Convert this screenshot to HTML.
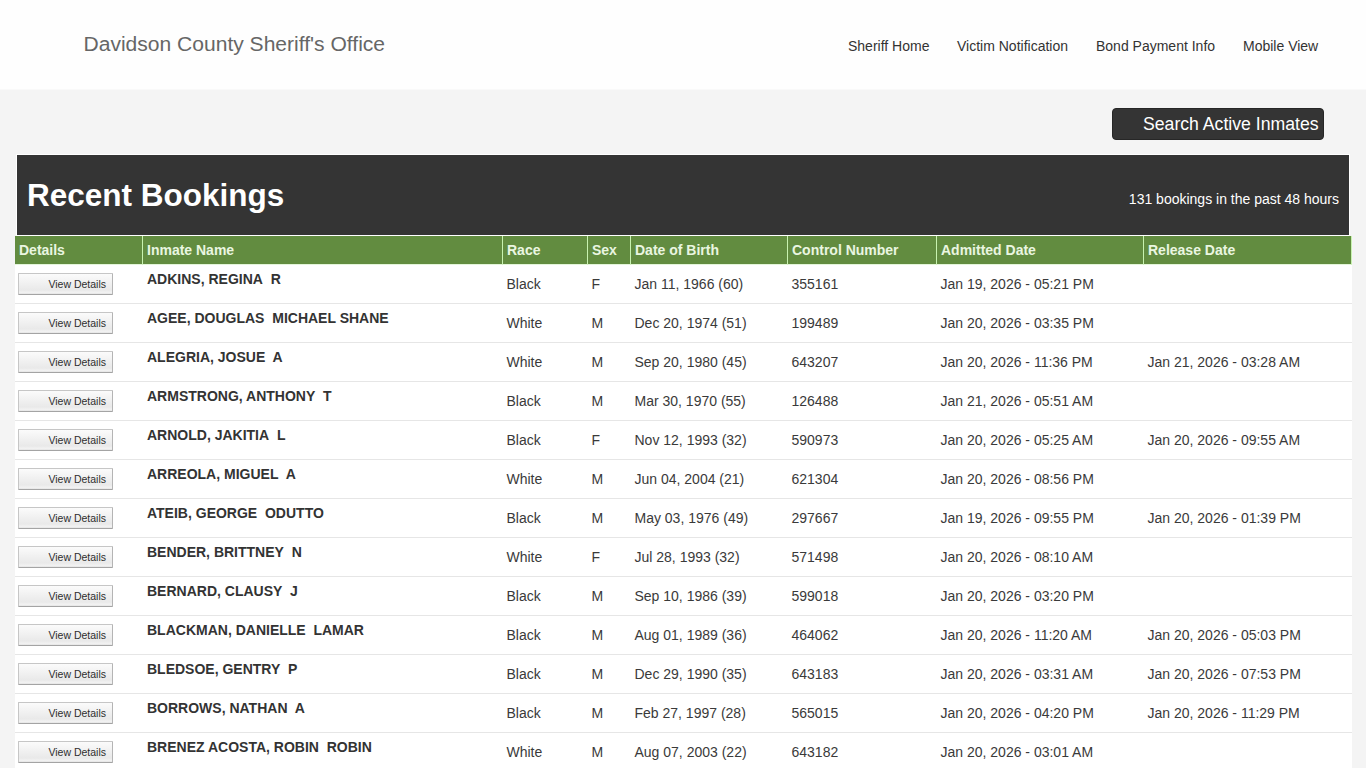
<!DOCTYPE html>
<html><head><meta charset="utf-8"><title>Recent Bookings</title>
<style>
html,body{margin:0;padding:0;}
body{background:#f4f4f4;font-family:"Liberation Sans",sans-serif;width:1366px;height:768px;overflow:hidden;position:relative;}
#hdr{position:absolute;left:0;top:0;width:1366px;height:89px;background:#fefefe;border-bottom:1px solid #f9f9f9;}
#title{position:absolute;left:83.5px;top:31.5px;font-size:21.05px;line-height:24px;color:#666;white-space:nowrap;}
#nav{position:absolute;top:37px;left:0;width:1366px;height:18px;font-size:14px;line-height:18px;color:#333;}
#nav span{position:absolute;top:0;white-space:nowrap;}
.n1{left:848px}.n2{left:957px}.n3{left:1096px}.n4{left:1243px}
#search{position:absolute;left:1112px;top:108px;width:212px;height:32px;box-sizing:border-box;background:#343434;border:1px solid #262626;border-radius:4px;}
#search span{position:absolute;left:30px;top:5px;font-size:17.65px;line-height:20px;color:#fff;white-space:nowrap;}
#box{position:absolute;left:16px;top:154px;width:1332px;height:80px;background:#343434;border:1px solid #fff;}
#rb{position:absolute;left:10px;top:22px;font-size:31.5px;line-height:36px;font-weight:bold;color:#fff;white-space:nowrap;}
#cnt{position:absolute;right:10px;top:36px;font-size:14px;line-height:16px;color:#fff;white-space:nowrap;}
#t{position:absolute;left:15px;top:236px;width:1337px;border-collapse:separate;border-spacing:0;table-layout:fixed;background:#fff;}
#t th{height:28px;padding:0 0 0 4px;background:#628c40;color:#eaf6e0;font-size:14px;font-weight:bold;text-align:left;border-right:1px solid #c8f2b0;border-bottom:1px solid #e4f6da;box-sizing:content-box;white-space:nowrap;line-height:16px;}

#t td{height:38px;padding:0 0 0 3.5px;font-size:14px;color:#3a3a3a;border-bottom:1px solid #e6e6e6;box-sizing:content-box;white-space:nowrap;vertical-align:middle;line-height:16px;}
#t td:first-child{padding-left:3px;}
#t td.nm{padding-left:4px;}
#t td.nm div{position:relative;top:-5px;font-weight:bold;color:#333;}
.btn{width:95px;height:22px;box-sizing:border-box;border:1px solid #c6c6c6;border-bottom-color:#a4a4a4;border-right-color:#b4b4b4;border-radius:1px;background:linear-gradient(#fbfbfb 0%,#f3f3f3 35%,#e9e9e9 80%,#f2f2f2 92%,#e4e4e4 100%);font-size:10.5px;line-height:20px;color:#2e2e2e;text-align:right;padding-right:6px;}

</style></head><body>
<div id="hdr">
<div id="title">Davidson County Sheriff's Office</div>
<div id="nav"><span class="n1">Sheriff Home</span><span class="n2">Victim Notification</span><span class="n3">Bond Payment Info</span><span class="n4">Mobile View</span></div>
</div>
<div id="search"><span>Search Active Inmates</span></div>
<div id="box"><div id="rb">Recent Bookings</div><div id="cnt">131 bookings in the past 48 hours</div></div>
<div id="gap"></div>
<table id="t">
<colgroup><col style="width:128px"><col style="width:360px"><col style="width:85px"><col style="width:43px"><col style="width:157px"><col style="width:149px"><col style="width:207px"><col style="width:208px"></colgroup>
<thead><tr><th>Details</th><th>Inmate Name</th><th>Race</th><th>Sex</th><th>Date of Birth</th><th>Control Number</th><th>Admitted Date</th><th>Release Date</th></tr></thead>
<tbody>
<tr><td><div class="btn">View Details</div></td><td class="nm"><div>ADKINS, REGINA&nbsp; R</div></td><td>Black</td><td>F</td><td>Jan 11, 1966 (60)</td><td>355161</td><td>Jan 19, 2026 - 05:21 PM</td><td></td></tr>
<tr><td><div class="btn">View Details</div></td><td class="nm"><div>AGEE, DOUGLAS&nbsp; MICHAEL SHANE</div></td><td>White</td><td>M</td><td>Dec 20, 1974 (51)</td><td>199489</td><td>Jan 20, 2026 - 03:35 PM</td><td></td></tr>
<tr><td><div class="btn">View Details</div></td><td class="nm"><div>ALEGRIA, JOSUE&nbsp; A</div></td><td>White</td><td>M</td><td>Sep 20, 1980 (45)</td><td>643207</td><td>Jan 20, 2026 - 11:36 PM</td><td>Jan 21, 2026 - 03:28 AM</td></tr>
<tr><td><div class="btn">View Details</div></td><td class="nm"><div>ARMSTRONG, ANTHONY&nbsp; T</div></td><td>Black</td><td>M</td><td>Mar 30, 1970 (55)</td><td>126488</td><td>Jan 21, 2026 - 05:51 AM</td><td></td></tr>
<tr><td><div class="btn">View Details</div></td><td class="nm"><div>ARNOLD, JAKITIA&nbsp; L</div></td><td>Black</td><td>F</td><td>Nov 12, 1993 (32)</td><td>590973</td><td>Jan 20, 2026 - 05:25 AM</td><td>Jan 20, 2026 - 09:55 AM</td></tr>
<tr><td><div class="btn">View Details</div></td><td class="nm"><div>ARREOLA, MIGUEL&nbsp; A</div></td><td>White</td><td>M</td><td>Jun 04, 2004 (21)</td><td>621304</td><td>Jan 20, 2026 - 08:56 PM</td><td></td></tr>
<tr><td><div class="btn">View Details</div></td><td class="nm"><div>ATEIB, GEORGE&nbsp; ODUTTO</div></td><td>Black</td><td>M</td><td>May 03, 1976 (49)</td><td>297667</td><td>Jan 19, 2026 - 09:55 PM</td><td>Jan 20, 2026 - 01:39 PM</td></tr>
<tr><td><div class="btn">View Details</div></td><td class="nm"><div>BENDER, BRITTNEY&nbsp; N</div></td><td>White</td><td>F</td><td>Jul 28, 1993 (32)</td><td>571498</td><td>Jan 20, 2026 - 08:10 AM</td><td></td></tr>
<tr><td><div class="btn">View Details</div></td><td class="nm"><div>BERNARD, CLAUSY&nbsp; J</div></td><td>Black</td><td>M</td><td>Sep 10, 1986 (39)</td><td>599018</td><td>Jan 20, 2026 - 03:20 PM</td><td></td></tr>
<tr><td><div class="btn">View Details</div></td><td class="nm"><div>BLACKMAN, DANIELLE&nbsp; LAMAR</div></td><td>Black</td><td>M</td><td>Aug 01, 1989 (36)</td><td>464062</td><td>Jan 20, 2026 - 11:20 AM</td><td>Jan 20, 2026 - 05:03 PM</td></tr>
<tr><td><div class="btn">View Details</div></td><td class="nm"><div>BLEDSOE, GENTRY&nbsp; P</div></td><td>Black</td><td>M</td><td>Dec 29, 1990 (35)</td><td>643183</td><td>Jan 20, 2026 - 03:31 AM</td><td>Jan 20, 2026 - 07:53 PM</td></tr>
<tr><td><div class="btn">View Details</div></td><td class="nm"><div>BORROWS, NATHAN&nbsp; A</div></td><td>Black</td><td>M</td><td>Feb 27, 1997 (28)</td><td>565015</td><td>Jan 20, 2026 - 04:20 PM</td><td>Jan 20, 2026 - 11:29 PM</td></tr>
<tr><td><div class="btn">View Details</div></td><td class="nm"><div>BRENEZ ACOSTA, ROBIN&nbsp; ROBIN</div></td><td>White</td><td>M</td><td>Aug 07, 2003 (22)</td><td>643182</td><td>Jan 20, 2026 - 03:01 AM</td><td></td></tr>
</tbody></table>
</body></html>
